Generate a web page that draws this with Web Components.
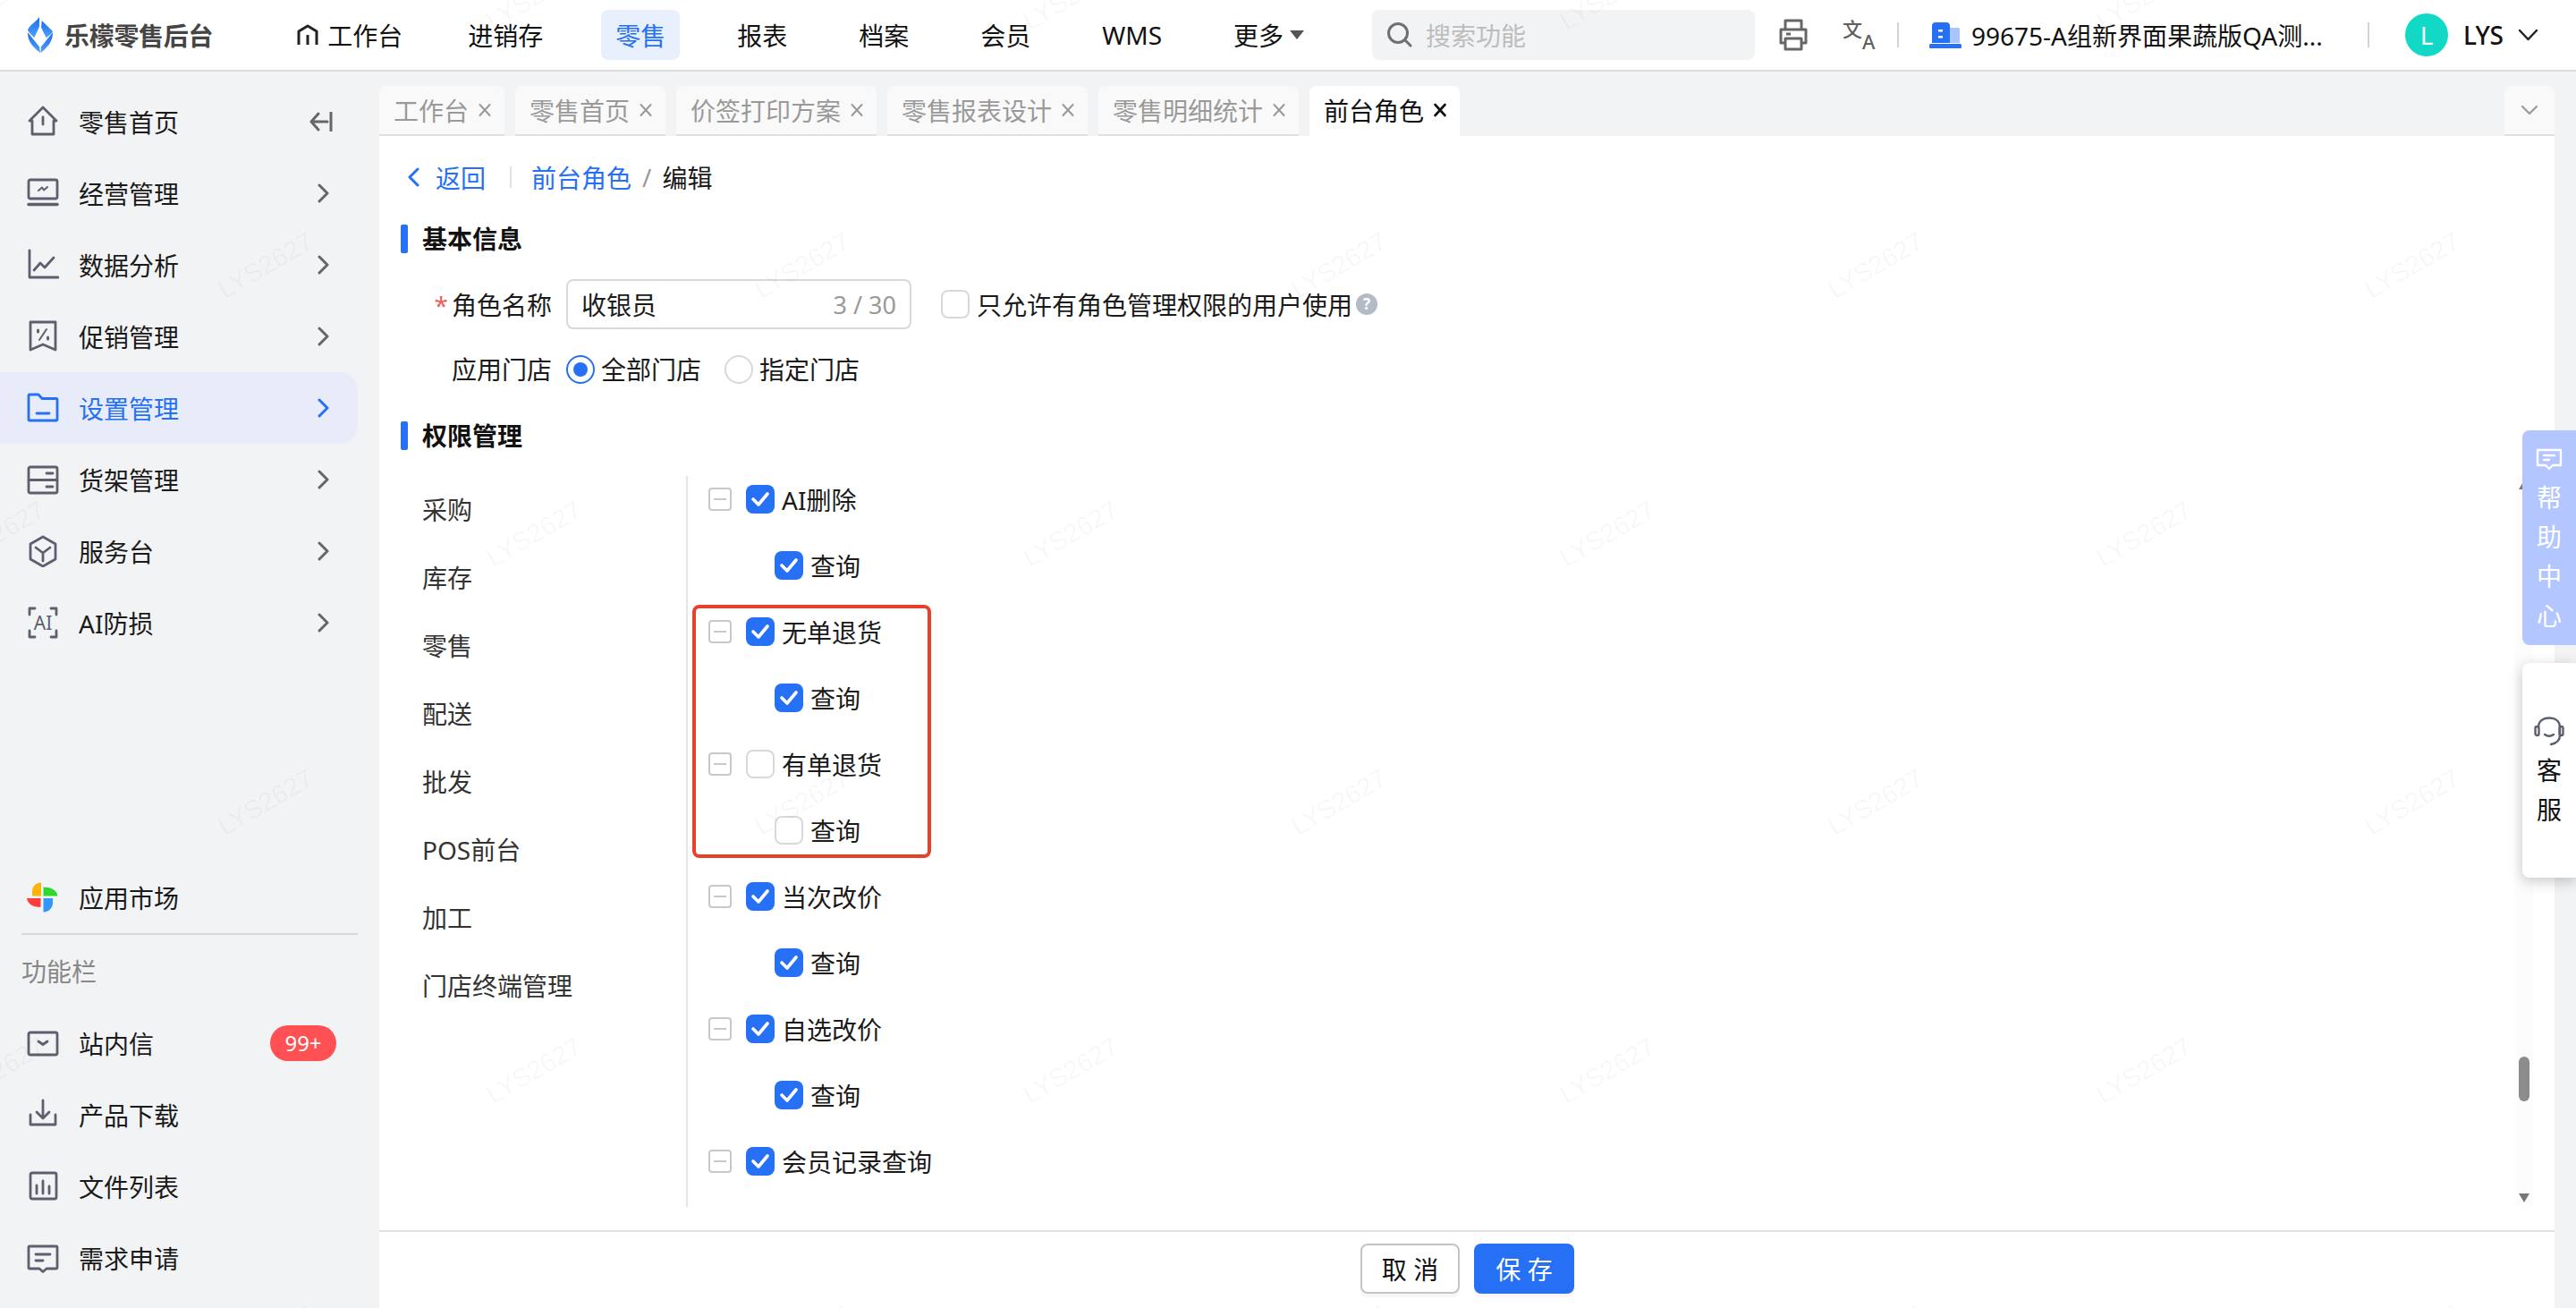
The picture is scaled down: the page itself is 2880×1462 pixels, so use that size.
<!DOCTYPE html>
<html lang="zh-CN">
<head>
<meta charset="utf-8">
<title>前台角色</title>
<style>
  html, body { margin: 0; height: 100%; overflow: hidden; }
  body { font: 28px "Noto Sans", "Noto Sans CJK SC", sans-serif; color: #1a1a1a; background: #f2f3f5; }
</style>
</head>
<body>
<app-shell>
  <top-bar slot="top"></top-bar>
  <side-nav slot="side"></side-nav>
  <tab-strip slot="tabs">
    <tab-item label="工作台"></tab-item>
    <tab-item label="零售首页"></tab-item>
    <tab-item label="价签打印方案"></tab-item>
    <tab-item label="零售报表设计"></tab-item>
    <tab-item label="零售明细统计"></tab-item>
    <tab-item label="前台角色" active></tab-item>
  </tab-strip>
  <edit-panel slot="panel">
    <role-form></role-form>
    <perm-area>
      <perm-row label="AI删除" checked></perm-row>
      <perm-row label="查询" child checked></perm-row>
      <mark-box>
        <perm-row label="无单退货" checked></perm-row>
        <perm-row label="查询" child checked></perm-row>
        <perm-row label="有单退货"></perm-row>
        <perm-row label="查询" child></perm-row>
      </mark-box>
      <perm-row label="当次改价" checked></perm-row>
      <perm-row label="查询" child checked></perm-row>
      <perm-row label="自选改价" checked></perm-row>
      <perm-row label="查询" child checked></perm-row>
      <perm-row label="会员记录查询" checked></perm-row>
    </perm-area>
  </edit-panel>
</app-shell>
<float-tab kind="help"></float-tab>
<float-tab kind="service"></float-tab>
<water-mark></water-mark>

<script>
const BLUE = '#2670f6';

// icons for the side menu, all drawn on a 36 box
const ICONS = {
  home: '<path d="M18 2 33 17h-3v15H6V17H3z"/><path d="M18 13v8"/>',
  board: '<rect x="2" y="3" width="32" height="21" rx="2"/><path d="M2 30.5h32" stroke-width="3.5"/><path d="M13 15l4-3.500 2 3 4-3.500" stroke-width="2"/>',
  chart: '<path d="M3 2v30h32"/><path d="M8 24l7-8 5 5 10-11"/>',
  promo: '<path d="M4 2h28v31l-14-6-14 6z"/><path d="M22 10l-8 12" stroke-width="2"/><path d="M12.500 11v2M23.500 19v2" stroke-width="3"/>',
  folder: '<path d="M2 4a1 1 0 0 1 1-1h10l4 4.500h16a1 1 0 0 1 1 1V31a1 1 0 0 1-1 1H3a1 1 0 0 1-1-1z"/><path d="M11 24h14"/>',
  shelf: '<rect x="2" y="4" width="32" height="29" rx="2"/><path d="M2 18.500h32M22 11h7M22 26h7"/>',
  cube: '<path d="M18 2 32 10v17l-14 8-14-8V10z"/><path d="M10 14l8 6 8-6M18 20v9"/>',
  ai: '<path d="M9 2H3v7M27 2h6v7M9 34H3v-7M27 34h6v-7"/><text x="18" y="26" text-anchor="middle" font-size="21" fill="currentColor" stroke="none">AI</text>',
  mail: '<rect x="2" y="6" width="32" height="25" rx="2"/><path d="M13 16l5 3.500 5-3.500"/>',
  download: '<path d="M18 2v19M11 15l7 7 7-7"/><path d="M4 18v11h28V18"/>',
  files: '<rect x="4" y="3" width="29" height="29" rx="2"/><path d="M11 17v9M18 12v14M25 18v8"/>',
  bubble: '<path d="M3 5h30a1 1 0 0 1 1 1v23a1 1 0 0 1-1 1H22l-4 3.500-4-3.500H3a1 1 0 0 1-1-1V6a1 1 0 0 1 1-1z"/><path d="M10 14h16M10 21h8"/>'
};

function chevron(color) {
  return `<svg width="13" height="22" viewBox="0 0 13 22" fill="none" stroke="${color}" stroke-width="3" stroke-linecap="round" stroke-linejoin="round"><path d="M2 2l9 9-9 9"/></svg>`;
}

class AppShell extends HTMLElement {
  constructor() {
    super();
    this.attachShadow({ mode: 'open' });
  }
  connectedCallback() {
    this.shadowRoot.innerHTML = `
    <style>
      :host { display: grid; grid-template-columns: 424px 1fr; grid-template-rows: 80px 72px 1fr; height: 1462px; }
      .top { grid-column: 1 / 3; }
      .side { grid-row: 2 / 4; min-height: 0; }
      .panel { min-height: 0; display: flex; }
    </style>
    <div class="top"><slot name="top"></slot></div>
    <div class="side"><slot name="side"></slot></div>
    <div class="tabs"><slot name="tabs"></slot></div>
    <div class="panel"><slot name="panel"></slot></div>`;
  }
}

class TopBar extends HTMLElement {
  constructor() {
    super();
    this.attachShadow({ mode: 'open' });
  }
  connectedCallback() {
    const navs = ['进销存', '零售', '报表', '档案', '会员', 'WMS'];
    this.shadowRoot.innerHTML = `
    <style>
      :host { display: flex; align-items: center; height: 78px; background: #fff; border-bottom: 2px solid #dcdcdc; color: #111; }
      svg { display: block; flex: none; }
      .brand { font-weight: 700; color: #454545; margin-left: 12px; letter-spacing: -.3px; }
      .nav { display: flex; align-items: center; gap: 48px; margin-left: 78px; }
      .nav div { display: flex; align-items: center; height: 56px; padding: 0 16px; border-radius: 8px; }
      .nav .first { margin-right: -7px; gap: 10px; }
      .nav .on { background: #e8effd; color: ${BLUE}; margin-left: 1px; }
      .more::after { content: ''; margin-left: 7px; border: 8px solid transparent; border-top: 10px solid #555; border-bottom: 0; }
      .right { display: flex; align-items: center; margin-left: auto; padding-right: 42px; }
      .search { display: flex; align-items: center; gap: 14px; width: 428px; height: 56px; box-sizing: border-box; padding-left: 16px; background: #f2f3f5; border-radius: 8px; color: #bdbdbd; }
      .sep { width: 2px; height: 28px; background: #d4d4d4; flex: none; }
      .shop { width: 388px; margin-left: 11px; white-space: nowrap; }
      .avatar { width: 48px; height: 48px; margin-left: 40px; border-radius: 50%; background: #11d9c5; color: #fff; display: flex; align-items: center; justify-content: center; flex: none; }
      .user { width: 45px; margin-left: 17px; font-weight: 500; letter-spacing: -.5px; }
      .tr { width: 36px; height: 36px; margin-left: 39px; overflow: visible; }
    </style>
    <svg style="margin-left:30px" width="30" height="40" viewBox="0 0 30 40">
      <defs><linearGradient id="lg" x1="0" y1="0" x2="0" y2="1"><stop offset="0" stop-color="#1b6cf2"/><stop offset="1" stop-color="#4fa2fa"/></linearGradient></defs>
      <g fill="url(#lg)">
        <path d="M14 0C11 5 4 8 1 14c1 4 5 6 7.300 9.300L14 10.700z"/>
        <path d="M16.700 4 29 16c-1 3-5 5-7.300 7.300L16 11.700z"/>
        <path d="M1 17.300C1 25 4 32 15 40l-1-6.700L7.300 25z"/>
        <path d="M29 17.300C29 25 26 32 15.500 40l.5-6.700L22.700 25z"/>
      </g>
    </svg>
    <span class="brand">乐檬零售后台</span>
    <div class="nav">
      <div class="first">
        <svg width="24" height="24" viewBox="0 0 24 24" fill="none" stroke="#222" stroke-width="3" stroke-linejoin="round"><path d="M2 23V8l10-6 10 6v15M12 12v11"/></svg>
        工作台
      </div>
      ${navs.map(n => `<div class="${n === '零售' ? 'on' : ''}">${n}</div>`).join('')}
      <div class="more">更多</div>
    </div>
    <div class="right">
      <div class="search">
        <svg width="30" height="30" viewBox="0 0 30 30" fill="none" stroke="#707070" stroke-width="3" stroke-linecap="round"><circle cx="13" cy="13" r="10.500"/><path d="M21 21l6 6"/></svg>
        搜索功能
      </div>
      <svg style="margin-left:27px" width="32" height="36" viewBox="0 0 32 36" fill="none" stroke="#666" stroke-width="3" stroke-linejoin="round"><path d="M7 12V2h18v10M7 27H2V12h28v15h-5"/><path d="M7 22h18v12H7zM8 17h5"/></svg>
      <svg class="tr" viewBox="0 0 36 36" fill="#5f5f5f"><text x="0" y="20" font-size="22" font-weight="500">文</text><text x="22" y="34" font-size="22" font-weight="500">A</text></svg>
      <div class="sep" style="margin-left:25px"></div>
      <svg style="margin-left:34px" width="36" height="30" viewBox="0 0 36 30">
        <path d="M23 7h9a2 2 0 0 1 2 2v15H23z" fill="#a9c6fb"/>
        <path d="M3 5a4 4 0 0 1 4-4h12a4 4 0 0 1 4 4v19H3z" fill="${BLUE}"/>
        <path d="M10 9h5v2.500h-5zM10 16h5v2.500h-5z" fill="#fff"/>
        <rect x="0" y="25" width="36" height="5" rx="1.500" fill="${BLUE}"/>
      </svg>
      <span class="shop">99675-A组新界面果蔬版QA测...</span>
      <div class="sep" style="margin-left:55px"></div>
      <span class="avatar">L</span>
      <span class="user">LYS</span>
      <svg style="margin-left:16px" width="23" height="14" viewBox="0 0 23 14" fill="none" stroke="#222" stroke-width="2.500" stroke-linecap="round" stroke-linejoin="round"><path d="M2 2l9.500 10L21 2"/></svg>
    </div>`;
  }
}

class SideItem extends HTMLElement {
  constructor() {
    super();
    this.attachShadow({ mode: 'open' });
  }
  connectedCallback() {
    const active = this.hasAttribute('active');
    const color = active ? BLUE : '#5c5f6e';
    const tail = this.hasAttribute('arrow') ? chevron(active ? BLUE : '#666') : '';
    this.shadowRoot.innerHTML = `
    <style>
      :host { display: flex; align-items: center; height: 80px; width: 400px; box-sizing: border-box; padding-left: 30px; border-radius: 0 20px 20px 0; color: #1a1a1a; }
      :host([active]) { background: #e8ecf8; color: ${BLUE}; }
      .ic { display: block; flex: none; color: ${color}; }
      .t { margin-left: 22px; flex: 1; }
      .end { display: flex; align-items: center; margin-right: 32px; }
    </style>
    <svg class="ic" width="36" height="36" viewBox="0 0 36 36" fill="none" stroke="currentColor" stroke-width="2.800" stroke-linejoin="round" stroke-linecap="round">${ICONS[this.getAttribute('icon')] || ''}</svg>
    <span class="t">${this.getAttribute('label')}</span>
    <span class="end">${tail}<slot></slot></span>`;
  }
}

class SideNav extends HTMLElement {
  constructor() {
    super();
    this.attachShadow({ mode: 'open' });
  }
  connectedCallback() {
    const items = [
      ['board', '经营管理'], ['chart', '数据分析'], ['promo', '促销管理'], ['folder', '设置管理', 1],
      ['shelf', '货架管理'], ['cube', '服务台'], ['ai', 'AI防损']
    ];
    this.shadowRoot.innerHTML = `
    <style>
      :host { display: flex; flex-direction: column; height: 100%; box-sizing: border-box; padding: 16px 0 16px; }
      .collapse { display: block; margin-right: -4px; }
      .rule { height: 2px; background: #d8d9dc; margin: 0 24px; width: 376px; }
      .low { margin-top: auto; }
      .cap { color: #888; margin: 20px 0 0 24px; height: 61px; line-height: 42px; }
      .badge { display: block; width: 74px; height: 40px; line-height: 40px; border-radius: 20px; background: #ff5053; color: #fff; text-align: center; font-size: 24px; margin-right: -8px; }
      .market { display: flex; align-items: center; height: 80px; padding-left: 30px; }
      .market span { margin-left: 23px; }
    </style>
    <side-item icon="home" label="零售首页">
      <svg class="collapse" width="26" height="22" viewBox="0 0 26 22" fill="none" stroke="#666" stroke-width="3" stroke-linecap="round" stroke-linejoin="round"><path d="M24 1v20M20 11H3M10 2l-8 9 8 9"/></svg>
    </side-item>
    ${items.map(i => `<side-item icon="${i[0]}" label="${i[1]}" arrow ${i[2] ? 'active' : ''}></side-item>`).join('')}
    <div class="market low">
      <svg width="35" height="34" viewBox="0 0 35 34">
        <path d="M16 15.500V.5C10 .5 6 5 6 10v5.500z" fill="#ffb20a"/>
        <path d="M18.500 15.500V5.500c8 0 15 3 16 10z" fill="#2ed92e"/>
        <path d="M18.500 18h10.500v6c-.5 6-5.500 9.500-10.500 9.500z" fill="#3396ff"/>
        <path d="M15.500 18v10C8 28 1 25 0 18z" fill="#ff3b3b"/>
      </svg>
      <span>应用市场</span>
    </div>
    <div class="rule"></div>
    <div class="cap">功能栏</div>
    <side-item icon="mail" label="站内信"><span class="badge">99+</span></side-item>
    <side-item icon="download" label="产品下载"></side-item>
    <side-item icon="files" label="文件列表"></side-item>
    <side-item icon="bubble" label="需求申请"></side-item>`;
  }
}

class TabStrip extends HTMLElement {
  constructor() {
    super();
    this.attachShadow({ mode: 'open' });
  }
  connectedCallback() {
    this.shadowRoot.innerHTML = `
    <style>
      :host { display: flex; gap: 12px; height: 56px; padding: 16px 24px 0 0; }
      .fold { margin-left: auto; width: 56px; height: 54px; background: #f9f9f9; border-bottom: 2px solid #e0e0e0; border-radius: 8px 8px 0 0; display: flex; align-items: center; justify-content: center; }
    </style>
    <slot></slot>
    <div class="fold">
      <svg width="20" height="12" viewBox="0 0 20 12" fill="none" stroke="#999" stroke-width="2.200" stroke-linecap="round" stroke-linejoin="round"><path d="M2 2l8 8 8-8"/></svg>
    </div>`;
  }
}

class TabItem extends HTMLElement {
  constructor() {
    super();
    this.attachShadow({ mode: 'open' });
  }
  connectedCallback() {
    const active = this.hasAttribute('active');
    const c = active ? '#111' : '#999';
    this.shadowRoot.innerHTML = `
    <style>
      :host { display: flex; align-items: center; gap: 10px; height: 54px; padding: 0 14px 0 16px; background: #f9f9f9; border-bottom: 2px solid #e0e0e0; border-radius: 8px 8px 0 0; color: #999; }
      :host([active]) { background: #fff; color: #111; border-bottom-color: #fff; }
    </style>
    <span>${this.getAttribute('label')}</span>
    <svg width="16" height="16" viewBox="0 0 16 16" fill="none" stroke="${c}" stroke-width="${active ? 2.600 : 2}" stroke-linecap="round"><path d="M2.500 2l11 12M13.500 2l-11 12"/></svg>`;
  }
}

class EditPanel extends HTMLElement {
  constructor() {
    super();
    this.attachShadow({ mode: 'open' });
  }
  connectedCallback() {
    this.shadowRoot.innerHTML = `
    <style>
      :host { display: flex; flex-direction: column; flex: 1; margin-right: 24px; background: #fff; min-width: 0; }
      .body { flex: 1; padding: 24px 24px 0; min-height: 0; }
      .foot { height: 72px; border-top: 2px solid #e2e2e2; display: flex; justify-content: center; gap: 16px; padding: 13px 0 0 1px; }
      .btn { height: 56px; box-sizing: border-box; border-radius: 8px; display: flex; align-items: center; justify-content: center; box-shadow: 0 4px 0 #f6f6f6; }
      .plain { width: 111px; border: 2px solid #c4c4c4; background: #fff; color: #111; }
      .main { width: 112px; background: ${BLUE}; color: #fff; }
    </style>
    <div class="body"><slot></slot></div>
    <div class="foot">
      <span class="btn plain">取 消</span>
      <span class="btn main">保 存</span>
    </div>`;
  }
}

class CheckBox extends HTMLElement {
  constructor() {
    super();
    this.attachShadow({ mode: 'open' });
  }
  connectedCallback() {
    const on = this.hasAttribute('checked');
    this.shadowRoot.innerHTML = `
    <style>
      :host { display: flex; align-items: center; justify-content: center; flex: none; width: 32px; height: 32px; box-sizing: border-box; border-radius: 8px; border: 2px solid #d9d9d9; background: #fff; }
      :host([checked]) { border: 0; background: ${BLUE}; }
    </style>
    ${on ? '<svg width="22" height="18" viewBox="0 0 22 18" fill="none" stroke="#fff" stroke-width="3.600" stroke-linecap="round" stroke-linejoin="round"><path d="M3 9l6 6 10-12"/></svg>' : ''}`;
  }
}

class RoleForm extends HTMLElement {
  constructor() {
    super();
    this.attachShadow({ mode: 'open' });
  }
  connectedCallback() {
    this.shadowRoot.innerHTML = `
    <style>
      :host { display: block; }
      .crumbs { display: flex; align-items: center; height: 44px; padding-left: 7px; color: ${BLUE}; }
      .crumbs .sep { width: 2px; height: 24px; background: #e2e2e2; margin: 0 22px 0 27px; }
      .crumbs .sl { color: #999; margin: 0 12px; }
      .crumbs .cur { color: #1a1a1a; }
      .crumbs svg { display: block; margin-right: 17px; }
      .sec { display: flex; align-items: center; height: 32px; font-weight: 700; color: #111; }
      .sec::before { content: ''; width: 8px; height: 32px; border-radius: 2px; background: ${BLUE}; margin-right: 16px; }
      .sec span { margin-top: -2px; }
      .s1 { margin-top: 31px; }
      .s2 { margin-top: 42px; }
      .row { display: flex; align-items: center; margin-top: 29px; height: 32px; }
      .row.name { height: 56px; }
      .lab { width: 169px; margin-right: 16px; text-align: right; flex: none; }
      .lab i { color: #f0605c; font-style: normal; margin-right: 4px; }
      .input { display: flex; align-items: center; justify-content: space-between; width: 386px; height: 56px; box-sizing: border-box; border: 2px solid #d9d9d9; border-radius: 8px; padding: 0 15px; }
      .input em { font-style: normal; color: #999; font-size: 27px; }
      .hint { margin-left: 8px; }
      .q { width: 24px; height: 24px; margin-left: 4px; border-radius: 50%; background: #b4bac6; color: #fff; font-size: 17px; font-weight: 700; line-height: 24px; text-align: center; flex: none; }
      .radio { width: 32px; height: 32px; box-sizing: border-box; border: 2px solid #d9d9d9; border-radius: 50%; flex: none; display: flex; align-items: center; justify-content: center; }
      .radio.on { border-color: ${BLUE}; }
      .radio.on::after { content: ''; width: 16px; height: 16px; border-radius: 50%; background: ${BLUE}; }
      .rt { margin: -2px 26px 0 7px; }
      .shop .lab { margin-top: -2px; }
      check-box { margin-left: 33px; }
    </style>
    <div class="crumbs">
      <svg width="15" height="22" viewBox="0 0 15 22" fill="none" stroke="${BLUE}" stroke-width="3" stroke-linecap="round" stroke-linejoin="round"><path d="M12 2l-9 9 9 9"/></svg>
      返回
      <span class="sep"></span>
      前台角色
      <span class="sl">/</span>
      <span class="cur">编辑</span>
    </div>
    <div class="sec s1"><span>基本信息</span></div>
    <div class="row name">
      <div class="lab"><i>*</i>角色名称</div>
      <div class="input"><span>收银员</span><em>3 / 30</em></div>
      <check-box></check-box>
      <span class="hint">只允许有角色管理权限的用户使用</span>
      <span class="q">?</span>
    </div>
    <div class="row shop">
      <div class="lab">应用门店</div>
      <span class="radio on"></span><span class="rt">全部门店</span>
      <span class="radio"></span><span class="rt">指定门店</span>
    </div>
    <div class="sec s2"><span>权限管理</span></div>`;
  }
}

class PermArea extends HTMLElement {
  constructor() {
    super();
    this.attachShadow({ mode: 'open' });
  }
  connectedCallback() {
    const groups = ['采购', '库存', '零售', '配送', '批发', 'POS前台', '加工', '门店终端管理'];
    this.shadowRoot.innerHTML = `
    <style>
      :host { display: flex; height: 817px; margin-top: 29px; }
      .groups { width: 319px; flex: none; padding: 0 0 0 24px; box-sizing: border-box; color: #333; }
      .groups div { height: 76px; line-height: 76px; }
      .tree { flex: 1; border-left: 2px solid #e6e6e6; overflow: hidden; }
      .inner { margin-top: -11px; }
      .track { position: relative; width: 20px; flex: none; background: #fcfcfc; }
      .thumb { position: absolute; left: 4px; top: 649px; width: 12px; height: 50px; border-radius: 6px; background: #8c8c8c; }
      .up, .down { position: absolute; left: 4px; border: 6px solid transparent; }
      .up { top: 5px; border-bottom: 10px solid #777; border-top: 0; }
      .down { bottom: 5px; border-top: 10px solid #777; border-bottom: 0; }
    </style>
    <div class="groups">${groups.map(g => `<div>${g}</div>`).join('')}</div>
    <div class="tree"><div class="inner"><slot></slot></div></div>
    <div class="track"><span class="up"></span><span class="thumb"></span><span class="down"></span></div>`;
  }
}

class PermRow extends HTMLElement {
  constructor() {
    super();
    this.attachShadow({ mode: 'open' });
  }
  connectedCallback() {
    const child = this.hasAttribute('child');
    this.shadowRoot.innerHTML = `
    <style>
      :host { display: flex; align-items: center; height: 74px; padding-left: 23px; }
      :host([child]) { padding-left: 97px; }
      .exp { display: flex; align-items: center; justify-content: center; width: 26px; height: 26px; box-sizing: border-box; border: 2px solid #c8c8c8; border-radius: 4px; margin-right: 16px; }
      .exp::after { content: ''; width: 14px; height: 2px; background: #c8c8c8; }
      span.t { margin-left: 8px; }
    </style>
    ${child ? '' : '<span class="exp"></span>'}
    <check-box ${this.hasAttribute('checked') ? 'checked' : ''}></check-box>
    <span class="t">${this.getAttribute('label')}</span>`;
  }
}

// red annotation frame drawn over its rows
class MarkBox extends HTMLElement {
  constructor() {
    super();
    this.attachShadow({ mode: 'open' });
  }
  connectedCallback() {
    this.shadowRoot.innerHTML = `
    <style>
      :host { display: block; position: relative; }
      .frame { position: absolute; left: 5px; top: 7px; bottom: 6px; width: 267px; box-sizing: border-box; border: 4px solid #e8402a; border-radius: 8px; pointer-events: none; }
    </style>
    <slot></slot>
    <div class="frame"></div>`;
  }
}

class FloatTab extends HTMLElement {
  constructor() {
    super();
    this.attachShadow({ mode: 'open' });
  }
  connectedCallback() {
    const help = this.getAttribute('kind') === 'help';
    const icon = help
      ? '<svg width="30" height="25" viewBox="0 0 30 25" fill="none" stroke="#fff" stroke-width="2.400" stroke-linejoin="round" stroke-linecap="round"><path d="M2 2h26v17H19l-4 4-4-4H2z"/><path d="M9 8h12M9 13h6"/></svg>'
      : '<svg width="34" height="33" viewBox="0 0 34 33" fill="none" stroke="#5c5f6e" stroke-width="2.400" stroke-linecap="round"><path d="M5 12C5 5 10 1.500 17 1.500S29 5 29 12v9c0 6-5 9-10 10"/><rect x="1.500" y="11" width="4" height="10" rx="2"/><rect x="28.500" y="11" width="4" height="10" rx="2"/><path d="M12 20c3 2 7 2 10 0"/></svg>';
    const chars = (help ? '帮助中心' : '客服').split('');
    this.shadowRoot.innerHTML = `
    <style>
      :host { position: absolute; right: 0; width: 60px; height: 240px; display: flex; flex-direction: column; align-items: center; box-sizing: border-box; border-radius: 8px 0 0 8px; z-index: 3; }
      :host([kind=help]) { top: 481px; padding-top: 20px; background: #b3c6ff; color: #fff; }
      :host([kind=service]) { top: 741px; padding-top: 60px; background: #fff; color: #111; box-shadow: 0 4px 16px rgba(0,0,0,.22); }
      :host([kind=help]) svg { margin-bottom: 8px; }
      :host([kind=service]) svg { margin-bottom: 5px; }
      svg { display: block; flex: none; }
      span { display: block; height: 44px; line-height: 44px; }
    </style>
    ${icon}
    ${chars.map(c => `<span>${c}</span>`).join('')}`;
  }
}

class WaterMark extends HTMLElement {
  constructor() {
    super();
    this.attachShadow({ mode: 'open' });
  }
  connectedCallback() {
    // staggered marks, 600 apart on a row, rows 300 apart
    let marks = '';
    for (let row = 0; row < 6; row++) {
      const y = -3 + row * 300;
      const x0 = row % 2 ? 297 : -3;
      for (let x = x0; x < 2900; x += 600) {
        marks += `<span style="left:${x}px;top:${y}px">LYS2627</span>`;
      }
    }
    this.shadowRoot.innerHTML = `
    <style>
      :host { position: absolute; inset: 0; overflow: hidden; pointer-events: none; z-index: 5; }
      span { position: absolute; transform: translate(-50%, -50%) rotate(-30deg); font: 29px "Liberation Sans", sans-serif; color: rgba(0,0,0,.04); white-space: nowrap; }
    </style>
    ${marks}`;
  }
}

customElements.define('app-shell', AppShell);
customElements.define('top-bar', TopBar);
customElements.define('side-item', SideItem);
customElements.define('side-nav', SideNav);
customElements.define('tab-strip', TabStrip);
customElements.define('tab-item', TabItem);
customElements.define('edit-panel', EditPanel);
customElements.define('check-box', CheckBox);
customElements.define('role-form', RoleForm);
customElements.define('perm-area', PermArea);
customElements.define('perm-row', PermRow);
customElements.define('mark-box', MarkBox);
customElements.define('float-tab', FloatTab);
customElements.define('water-mark', WaterMark);
</script>
</body>
</html>
